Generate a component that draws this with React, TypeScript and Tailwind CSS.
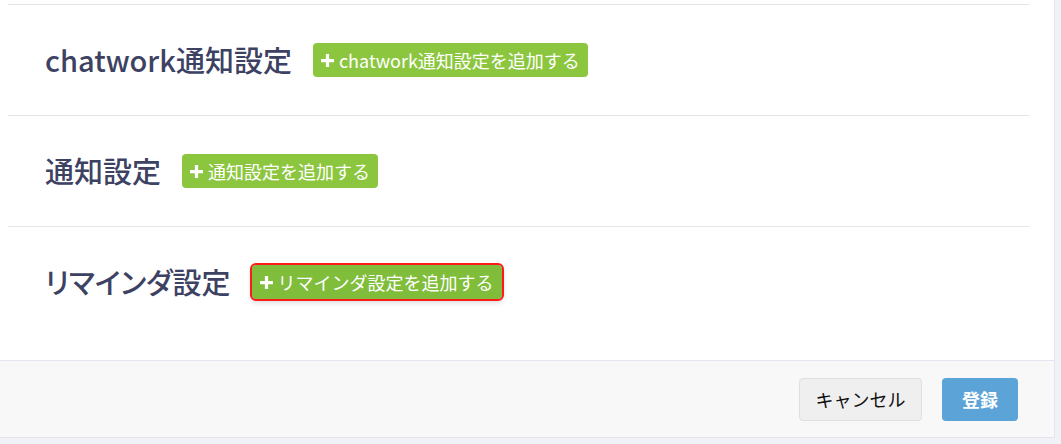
const jp = "font-['Noto_Sans_CJK_JP','Noto_Sans',sans-serif]";

function PlusIcon() {
  return (
    <svg className="h-[13px] w-[13px] shrink-0" viewBox="0 0 12 12" fill="currentColor">
      <path d="M4.5 0h3v4.5H12v3H7.5V12h-3V7.5H0v-3h4.5z" />
    </svg>
  );
}

function AddButton({ label, focused }: { label: string; focused?: boolean }) {
  return (
    <button
      className={`flex h-[34px] items-center gap-[5px] rounded-[4px] px-[8px] text-[18px] text-white ${
        focused
          ? 'bg-[#80bd3b] shadow-[0_3px_6px_rgba(0,0,0,0.18)] outline-2 outline-[#ff1a1a] outline-offset-0'
          : 'bg-[#8cc63f]'
      }`}
    >
      <PlusIcon />
      <span className="leading-none">{label}</span>
    </button>
  );
}

const sections = [
  { title: 'chatwork通知設定', button: 'chatwork通知設定を追加する' },
  { title: '通知設定', button: '通知設定を追加する' },
  { title: 'リマインダ設定', button: 'リマインダ設定を追加する', focused: true },
];

export default function App() {
  return (
    <div className={`flex h-[444px] w-full bg-[#f1f2f7] ${jp}`}>
      <div className="flex h-[438px] w-[1055px] flex-col border-r border-b border-[#e3e4ee] bg-white">
        {/* Sections */}
        <div className="flex-1 pt-1 pr-[25px] pl-2">
          {sections.map((s) => (
            <div key={s.title} className="flex h-[111px] items-center gap-[21px] border-t border-[#e5e5e5] pl-[37px]">
              <h2 className="text-[29px] font-medium text-[#3d4263] [font-feature-settings:'palt'_1]">{s.title}</h2>
              <AddButton label={s.button} focused={s.focused} />
            </div>
          ))}
        </div>

        {/* Footer */}
        <div className="flex h-[77px] items-center justify-end gap-5 border-t border-[#e3e4ee] bg-[#f8f8f8] pr-[36px]">
          <button className="h-[43px] w-[123px] rounded-[4px] border border-[#dedee4] bg-[#efefef] text-[18px] text-[#111]">
            キャンセル
          </button>
          <button className="h-[43px] w-[76px] rounded-[4px] bg-[#5ca3d8] text-[18px] font-bold text-white">登録</button>
        </div>
      </div>
    </div>
  );
}
